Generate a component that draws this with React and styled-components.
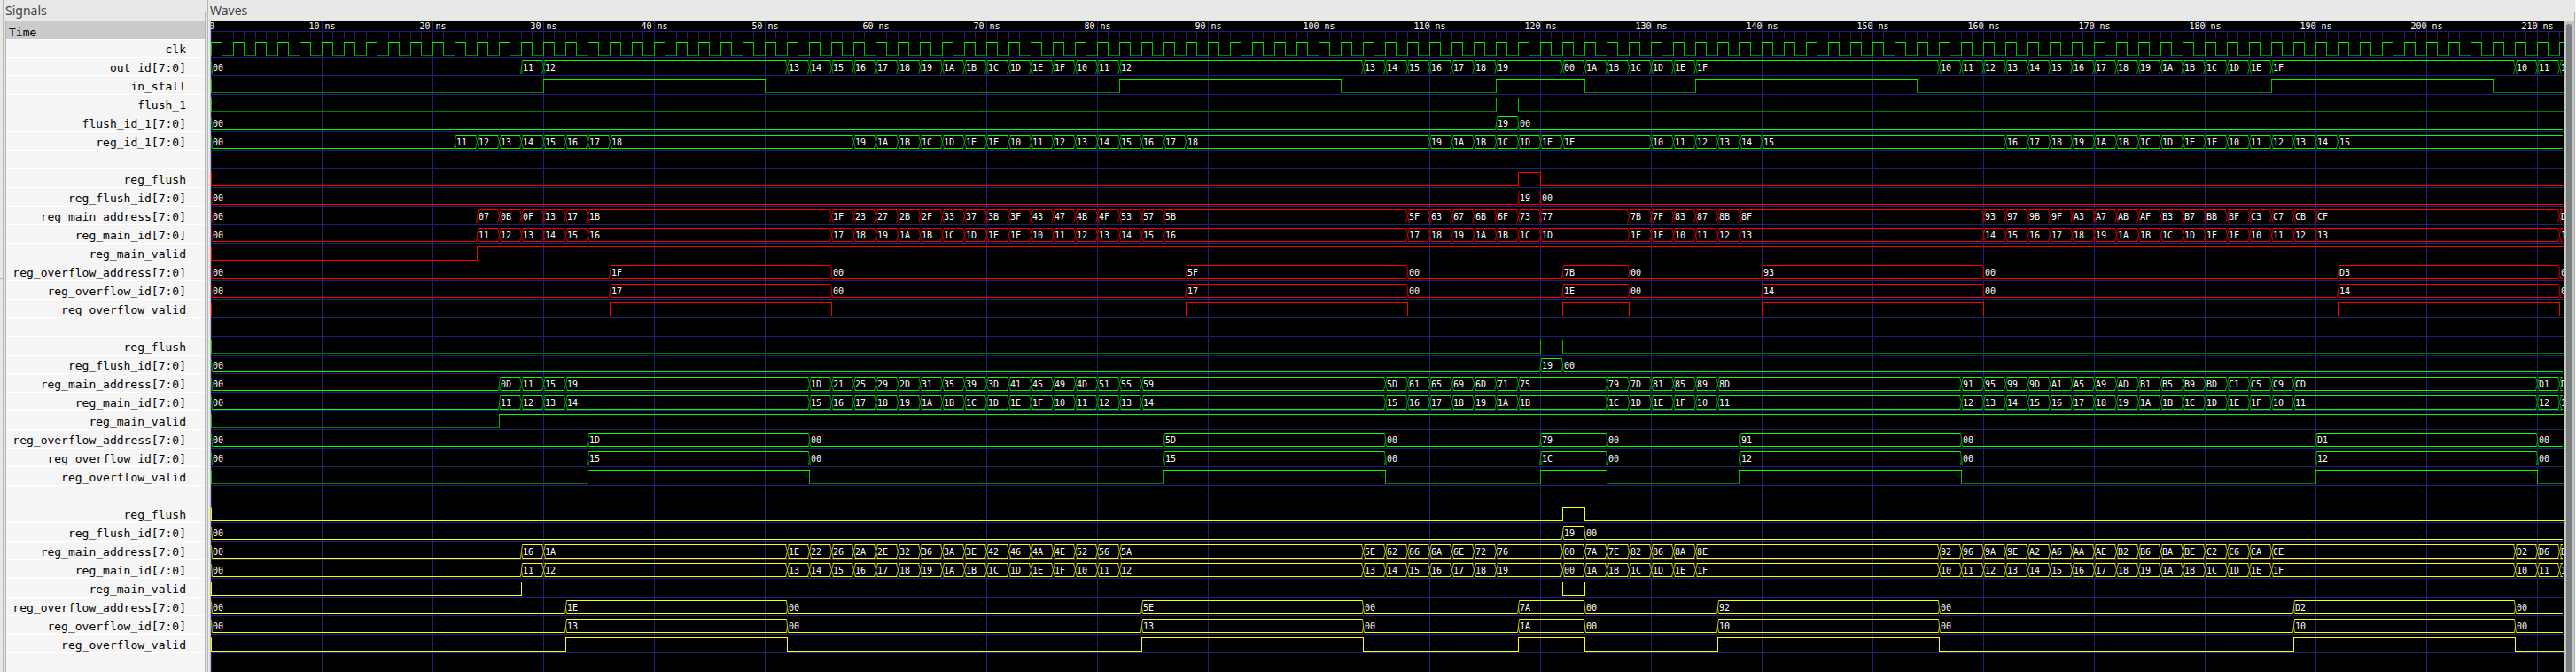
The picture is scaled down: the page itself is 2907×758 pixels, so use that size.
import React from 'react';
import styled, { createGlobalStyle, css } from 'styled-components';

const Global = createGlobalStyle`
  * { box-sizing: border-box; }
  body { margin: 0; background: #e8e8e6; font-family: "Noto Sans", sans-serif; }
`;

const NS = 12.5;
const ROW = 21;
const END = 2655;
const LINE = '#20207a';

const COLORS = {
  green: { high: '#00ff00', low: '#008000', edge: '#00c000', bus: '#00ff00', cross: '#00a000' },
  red: { high: '#ff0000', low: '#ff0000', edge: '#ff0000', bus: '#ff0000', cross: '#c00000' },
  yellow: { high: '#ffff00', low: '#ffff00', edge: '#ffff00', bus: '#ffff00', cross: '#c0c000' },
};

/* Bus data: "time:value value value" gives one value every 2 ns from that time. */
const bus = (name, text) => ({
  name,
  values: [[0, '00']].concat(
    text.split(';').filter(Boolean).flatMap((run) => {
      const [start, list] = run.trim().split(':');
      return list.split(' ').map((v, i) => [Number(start) + i * 2, v]);
    })
  ),
});
const bit = (name, ...toggles) => ({ name, toggles });
const paint = (color, list) => list.map((s) => ({ ...s, color }));
const gap = { name: '' };

const clock = Array.from({ length: 213 }, (_, i) => i);

const SIGNALS = [
  ...paint('green', [
    bit('clk', ...clock),
    bus('out_id[7:0]', '28:11 12;52:13 14 15 16 17 18 19 1A 1B 1C 1D 1E 1F 10 11 12;104:13 14 15 16 17 18 19;122:00 1A 1B 1C 1D 1E 1F;156:10 11 12 13 14 15 16 17 18 19 1A 1B 1C 1D 1E 1F;208:10 11 12'),
    bit('in_stall', 30, 50, 82, 102, 116, 124, 134, 154, 186, 206),
    bit('flush_1', 116, 118),
    bus('flush_id_1[7:0]', '116:19 00'),
    bus('reg_id_1[7:0]', '22:11 12 13 14 15 16 17 18;58:19 1A 1B 1C 1D 1E 1F 10 11 12 13 14 15 16 17 18;110:19 1A 1B 1C 1D 1E 1F;130:10 11 12 13 14 15;162:16 17 18 19 1A 1B 1C 1D 1E 1F 10 11 12 13 14 15'),
  ]),
  gap,
  ...paint('red', [
    bit('reg_flush', 118, 120),
    bus('reg_flush_id[7:0]', '118:19 00'),
    bus('reg_main_address[7:0]', '24:07 0B 0F 13 17 1B;56:1F 23 27 2B 2F 33 37 3B 3F 43 47 4B 4F 53 57 5B;108:5F 63 67 6B 6F 73 77;128:7B 7F 83 87 8B 8F;160:93 97 9B 9F A3 A7 AB AF B3 B7 BB BF C3 C7 CB CF;212:D3'),
    bus('reg_main_id[7:0]', '24:11 12 13 14 15 16;56:17 18 19 1A 1B 1C 1D 1E 1F 10 11 12 13 14 15 16;108:17 18 19 1A 1B 1C 1D;128:1E 1F 10 11 12 13;160:14 15 16 17 18 19 1A 1B 1C 1D 1E 1F 10 11 12 13;212:14'),
    bit('reg_main_valid', 24),
    bus('reg_overflow_address[7:0]', '36:1F;56:00;88:5F;108:00;122:7B;128:00;140:93;160:00;192:D3;212:00'),
    bus('reg_overflow_id[7:0]', '36:17;56:00;88:17;108:00;122:1E;128:00;140:14;160:00;192:14;212:00'),
    bit('reg_overflow_valid', 36, 56, 88, 108, 122, 128, 140, 160, 192, 212),
  ]),
  gap,
  ...paint('green', [
    bit('reg_flush', 120, 122),
    bus('reg_flush_id[7:0]', '120:19 00'),
    bus('reg_main_address[7:0]', '26:0D 11 15 19;54:1D 21 25 29 2D 31 35 39 3D 41 45 49 4D 51 55 59;106:5D 61 65 69 6D 71 75;126:79 7D 81 85 89 8D;158:91 95 99 9D A1 A5 A9 AD B1 B5 B9 BD C1 C5 C9 CD;210:D1 D5'),
    bus('reg_main_id[7:0]', '26:11 12 13 14;54:15 16 17 18 19 1A 1B 1C 1D 1E 1F 10 11 12 13 14;106:15 16 17 18 19 1A 1B;126:1C 1D 1E 1F 10 11;158:12 13 14 15 16 17 18 19 1A 1B 1C 1D 1E 1F 10 11;210:12 13'),
    bit('reg_main_valid', 26),
    bus('reg_overflow_address[7:0]', '34:1D;54:00;86:5D;106:00;120:79;126:00;138:91;158:00;190:D1;210:00'),
    bus('reg_overflow_id[7:0]', '34:15;54:00;86:15;106:00;120:1C;126:00;138:12;158:00;190:12;210:00'),
    bit('reg_overflow_valid', 34, 54, 86, 106, 120, 126, 138, 158, 190, 210),
  ]),
  gap,
  ...paint('yellow', [
    bit('reg_flush', 122, 124),
    bus('reg_flush_id[7:0]', '122:19 00'),
    bus('reg_main_address[7:0]', '28:16 1A;52:1E 22 26 2A 2E 32 36 3A 3E 42 46 4A 4E 52 56 5A;104:5E 62 66 6A 6E 72 76;122:00 7A 7E 82 86 8A 8E;156:92 96 9A 9E A2 A6 AA AE B2 B6 BA BE C2 C6 CA CE;208:D2 D6 DA'),
    bus('reg_main_id[7:0]', '28:11 12;52:13 14 15 16 17 18 19 1A 1B 1C 1D 1E 1F 10 11 12;104:13 14 15 16 17 18 19;122:00 1A 1B 1C 1D 1E 1F;156:10 11 12 13 14 15 16 17 18 19 1A 1B 1C 1D 1E 1F;208:10 11 12'),
    bit('reg_main_valid', 28, 122, 124),
    bus('reg_overflow_address[7:0]', '32:1E;52:00;84:5E;104:00;118:7A;124:00;136:92;156:00;188:D2;208:00'),
    bus('reg_overflow_id[7:0]', '32:13;52:00;84:13;104:00;118:1A;124:00;136:10;156:00;188:10;208:00'),
    bit('reg_overflow_valid', 32, 52, 84, 104, 118, 124, 136, 156, 188, 208),
  ]),
];

const Window = styled.main`
  display: flex;
  gap: 2px;
  min-height: 100vh;
  border-right: 1px solid #f6f6f5;
`;

const SplitMark = styled.div`
  flex: 0 0 3px;
  height: 1px;
  margin: 314px -2px 0 0;
  background: #b4b4b0;
`;

const Frame = styled.section`
  display: flex;
  flex-direction: column;
  border-left: 1px solid #b4b4b0;
  padding-left: 2px;
  ${(p) => (p.$grow ? css`flex: 1; min-width: 0;` : css`flex: 0 0 229px;`)}
`;

const Caption = styled.h2`
  display: flex;
  height: 24px;
  margin: 0;
  font-size: 14px;
  line-height: 24px;
  font-weight: 400;
  color: #414546;
  &::after {
    content: "";
    flex: 1;
    margin-top: 13px;
    border-top: 1px solid #b4b4b0;
    border-right: 1px solid #b4b4b0;
  }
`;

const Body = styled.div`
  flex: 1;
  display: flex;
  min-width: 0;
  border-left: 1px solid #b4b4b0;
  border-right: 1px solid #b4b4b0;
`;

const Names = styled.div`
  flex: 1;
  background: #f5f5f5;
  font: 13px/23px "DejaVu Sans Mono", monospace;
  color: #000;
`;

const TimeHead = styled.div`
  height: 20px;
  padding: 1px 3px 0;
  background: #cbcbcb;
`;

const NameList = styled.ul`
  margin: 0;
  padding: 0;
  list-style: none;
`;

const Name = styled.li`
  height: 21px;
  padding-right: 21px;
  border-top: 1px solid #fff;
  text-align: right;
  white-space: pre;
  &:first-child { height: 20px; line-height: 21px; }
  &:last-child { height: 22px; border-bottom: 1px solid #fff; }
`;

const Canvas = styled.div`
  flex: 1;
  min-width: 0;
  overflow: hidden;
  background: #000;
`;

const Plot = styled.svg`
  display: block;
  font: 10px "DejaVu Sans Mono", monospace;
  fill: #fff;
`;

const ScrollTrack = styled.div`
  flex: 0 0 12px;
  padding: 3px 3px 0;
  display: flex;
  background: #c4c6c5;
`;

const ScrollThumb = styled.div`
  flex: 1;
  border-radius: 3px 3px 0 0;
  background: #7a7f80;
`;

const px = (t) => Math.floor(t * NS) + 0.5;

function BitWave({ signal, base }) {
  const c = COLORS[signal.color];
  const hi = base - 17 + 0.5;
  const lo = base - 2 + 0.5;
  let high = '';
  let low = '';
  let edges = `M0.5 ${hi}V${lo}`;
  const stops = [0, ...signal.toggles.filter((t) => t > 0)];
  const startHigh = signal.toggles[0] === 0;
  stops.forEach((t, i) => {
    const isHigh = (i % 2 === 0) === startHigh;
    const end = i + 1 < stops.length ? px(stops[i + 1]) : END;
    const seg = `M${px(t) - 0.5} ${isHigh ? hi : lo}H${end + 0.5}`;
    if (isHigh) high += seg;
    else low += seg;
    if (i) edges += `M${px(t)} ${hi}V${lo}`;
  });
  return (
    <g fill="none">
      <path d={low} stroke={c.low} />
      <path d={edges} stroke={c.edge} />
      <path d={high} stroke={c.high} />
    </g>
  );
}

function BusWave({ signal, base }) {
  const c = COLORS[signal.color];
  const hi = base - 17 + 0.5;
  const lo = base - 2 + 0.5;
  const mid = (hi + lo) / 2;
  let rails = '';
  let cross = `M0.5 ${hi + 1}L1.5 ${lo}`;
  signal.values.forEach(([t, v], i) => {
    const next = signal.values[i + 1];
    const x = px(t);
    const start = x + 1;
    const end = next ? px(next[0]) - 1 : END - 1;
    rails += `M${start} ${lo}H${end}`;
    if (v !== '00') rails += `M${start} ${hi}H${end}`;
    const isBlank = v === '00' && next && next[0] - t === 2;
    if (isBlank) rails += `M${start} ${hi}H${end}`;
    if (i) {
      const before = signal.values[i - 1];
      const zeroBefore = before[1] === '00' && t - before[0] !== 2;
      const zeroAfter = v === '00' && !isBlank;
      if (zeroBefore) cross += `M${x - 1} ${lo}L${x + 1} ${hi}M${x} ${mid}L${x + 1} ${lo}`;
      else if (zeroAfter) cross += `M${x - 1} ${hi}L${x + 1} ${lo}M${x} ${mid}L${x - 1} ${lo}`;
      else cross += `M${x - 2} ${hi}L${x + 2} ${lo}M${x - 2} ${lo}L${x + 2} ${hi}`;
    }
  });
  return (
    <g>
      <path d={cross} stroke={c.cross} fill="none" />
      <path d={rails} stroke={c.bus} fill="none" />
      {signal.values.map(([t, v]) => (
        <text key={t} x={px(t) + 1.5} y={base - 5}>{v}</text>
      ))}
    </g>
  );
}

function Waves() {
  const marks = Array.from({ length: 22 }, (_, i) => i * 10);
  const ticks = Array.from({ length: 213 }, (_, i) => i);
  return (
    <Plot width={END} height="734" role="img" aria-label="Waveforms">
      <path
        stroke={LINE}
        d={`M0 11.5H${END}` +
          ticks.map((t) => `M${px(t)} 11V20`).join('') +
          marks.map((t) => `M${px(t)} 0V734`).join('') +
          SIGNALS.map((_, i) => `M0 ${40.5 + ROW * i}H${END}`).join('')}
      />
      {marks.map((t) => (
        t === 0
          ? <text key={t} x="-2" y="9">0</text>
          : <text key={t} x={px(t) - (t > 99 ? 18 : 15)} y="9">{`${t} ns`}</text>
      ))}
      {SIGNALS.map((s, i) => {
        const base = 40 + ROW * i;
        if (s.toggles) return <BitWave key={i} signal={s} base={base} />;
        if (s.values) return <BusWave key={i} signal={s} base={base} />;
        return null;
      })}
    </Plot>
  );
}

export default function App() {
  return (
    <>
      <Global />
      <Window>
        <SplitMark />
        <Frame>
          <Caption>Signals</Caption>
          <Body>
            <Names>
              <TimeHead>Time</TimeHead>
              <NameList>
                {SIGNALS.map((s, i) => <Name key={i}>{s.name}</Name>)}
              </NameList>
            </Names>
          </Body>
        </Frame>
        <Frame $grow>
          <Caption>Waves</Caption>
          <Body>
            <Canvas><Waves /></Canvas>
            <ScrollTrack><ScrollThumb /></ScrollTrack>
          </Body>
        </Frame>
      </Window>
    </>
  );
}
